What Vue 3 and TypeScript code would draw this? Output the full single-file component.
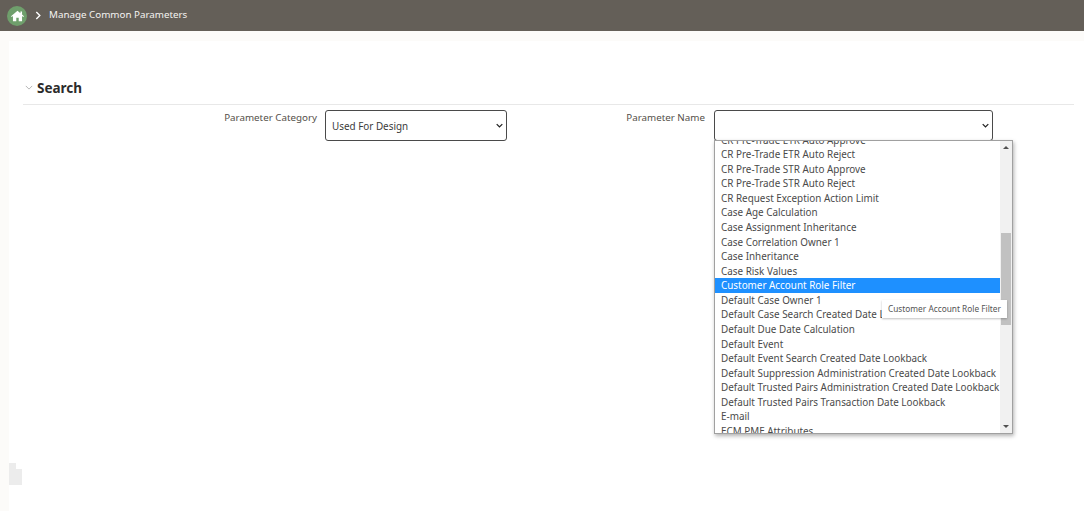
<script setup lang="ts">
const items: string[] = [
  'CR Pre-Trade ETR Auto Approve',
  'CR Pre-Trade ETR Auto Reject',
  'CR Pre-Trade STR Auto Approve',
  'CR Pre-Trade STR Auto Reject',
  'CR Request Exception Action Limit',
  'Case Age Calculation',
  'Case Assignment Inheritance',
  'Case Correlation Owner 1',
  'Case Inheritance',
  'Case Risk Values',
  'Customer Account Role Filter',
  'Default Case Owner 1',
  'Default Case Search Created Date Lookback',
  'Default Due Date Calculation',
  'Default Event',
  'Default Event Search Created Date Lookback',
  'Default Suppression Administration Created Date Lookback',
  'Default Trusted Pairs Administration Created Date Lookback',
  'Default Trusted Pairs Transaction Date Lookback',
  'E-mail',
  'ECM PME Attributes',
]
const selected = 'Customer Account Role Filter'
</script>

<template>
  <div class="page">
    <header class="topbar">
      <span class="home">
        <svg viewBox="0 0 16 14" width="13" height="12">
          <path fill="#fff" d="M8 .6 0 7.3l.9 1L2.4 7v6.6h4.1V9.3h3v4.3h4.1V7l1.5 1.3.9-1-2.4-2V1.4h-2v2.2z" />
        </svg>
      </span>
      <svg class="crumb" viewBox="0 0 8 10" width="7" height="9">
        <path d="M1.5 1 5.5 5l-4 4" fill="none" stroke="#fff" stroke-width="1.6" />
      </svg>
      <span class="title">Manage Common Parameters</span>
    </header>

    <main class="card">
      <section class="search">
        <div class="search-head">
          <svg viewBox="0 0 10 6" width="8" height="5">
            <path d="M1 1l4 4 4-4" fill="none" stroke="#adadad" stroke-width="1.1" />
          </svg>
          <h2>Search</h2>
        </div>
        <div class="form">
          <div class="field field-cat">
            <label>Parameter Category</label>
            <div class="select">
              <span>Used For Design</span>
              <svg class="chev" viewBox="0 0 10 6" width="7" height="5">
                <path d="M1 1l4 4 4-4" fill="none" stroke="#222" stroke-width="1.8" />
              </svg>
            </div>
          </div>
          <div class="field field-name">
            <label>Parameter Name</label>
            <div class="select select-wide">
              <span></span>
              <svg class="chev" viewBox="0 0 10 6" width="7" height="5">
                <path d="M1 1l4 4 4-4" fill="none" stroke="#222" stroke-width="1.8" />
              </svg>
              <div class="dropdown">
                <div class="options">
                  <div
                    v-for="item in items"
                    :key="item"
                    class="option"
                    :class="{ active: item === selected }"
                  >{{ item }}</div>
                </div>
                <div class="scrollbar">
                  <span class="arrow up"></span>
                  <span class="thumb"></span>
                  <span class="arrow down"></span>
                </div>
                <div class="tooltip">{{ selected }}</div>
              </div>
            </div>
          </div>
        </div>
      </section>
      <div class="tab"></div>
    </main>
  </div>
</template>

<style scoped>
.page {
  width: 1084px;
  height: 511px;
  overflow: hidden;
  background: #fcfbf9;
  font-family: "Noto Sans", "Open Sans", sans-serif;
  display: flex;
  flex-direction: column;
}
.topbar {
  height: 31px;
  flex: none;
  background: #645f58;
  display: flex;
  align-items: center;
  padding-left: 7px;
  color: #fff;
}
.home {
  width: 20px;
  height: 20px;
  border-radius: 50%;
  background: #6f9f6c;
  display: flex;
  align-items: center;
  justify-content: center;
}
.crumb {
  margin-left: 8px;
}
.title {
  margin-left: 7px;
  font-size: 9.8px;
  color: #f4f3f1;
  position: relative;
  top: -1px;
}
.card {
  position: relative;
  flex: 1;
  margin: 10px 0 0 9px;
  background: #fff;
  padding: 28px 10px 0 14px;
}
.search-head {
  display: flex;
  align-items: center;
  gap: 4px;
  height: 36px;
  padding: 2px 0 0 2px;
  border-bottom: 1px solid #e8e8e8;
  box-sizing: border-box;
}
.search-head h2 {
  margin: 0;
  font-size: 13.5px;
  font-weight: 700;
  color: #2b2b2b;
}
.form {
  display: flex;
  padding-top: 5px;
}
.field {
  display: flex;
  gap: 8px;
  align-items: flex-start;
}
.field label {
  width: 100px;
  flex: none;
  font-size: 9.8px;
  color: #55504a;
  line-height: 15px;
  text-align: right;
  white-space: nowrap;
}
.field-cat {
  margin-left: 194px;
}
.field-name {
  margin-left: 98px;
  gap: 9px;
}
.select {
  position: relative;
  width: 182px;
  height: 31px;
  box-sizing: border-box;
  border: 1px solid #4a4a4a;
  border-radius: 3px;
  background: #fff;
  display: flex;
  align-items: center;
  padding-left: 6px;
  font-size: 9.9px;
  color: #3a3a3a;
}
.select-wide {
  width: 279px;
}
.chev {
  position: absolute;
  right: 3px;
  top: 12px;
}
.dropdown {
  position: absolute;
  left: -1px;
  top: 29px;
  width: 299px;
  height: 294px;
  box-sizing: border-box;
  background: #fff;
  border: 1px solid #a0a0a0;
  box-shadow: 1px 2px 4px rgba(0, 0, 0, 0.3);
  display: flex;
  z-index: 2;
}
.options {
  flex: 1;
  min-width: 0;
  overflow: hidden;
  font-size: 9.9px;
  font-weight: 400;
  color: #4a4a4a;
}
.option {
  height: 14.58px;
  line-height: 14.58px;
  padding-left: 6px;
  white-space: nowrap;
  position: relative;
  top: -8.5px;
}
.option.active {
  background: #1e90ff;
  color: #fff;
}
.scrollbar {
  width: 12px;
  flex: none;
  background: #f1f1f1;
  position: relative;
}
.thumb {
  position: absolute;
  left: 1px;
  right: 1px;
  top: 92px;
  height: 92px;
  background: #c1c1c1;
}
.arrow {
  position: absolute;
  left: 3px;
  width: 0;
  height: 0;
  border-left: 3px solid transparent;
  border-right: 3px solid transparent;
}
.arrow.up {
  top: 5px;
  border-bottom: 3px solid #505050;
}
.arrow.down {
  bottom: 5px;
  border-top: 3px solid #505050;
}
.tooltip {
  position: absolute;
  left: 167px;
  top: 159px;
  height: 18px;
  line-height: 18px;
  padding: 0 6px;
  background: #fff;
  font-size: 8.3px;
  color: #555;
  white-space: nowrap;
  box-shadow: 0 1px 2px rgba(0, 0, 0, 0.25);
}
.tab {
  position: absolute;
  left: 0;
  top: 422px;
  width: 13px;
  height: 22px;
  background: #ececec;
  clip-path: polygon(0 0, 7px 0, 7px 6px, 100% 6px, 100% 100%, 0 100%);
}
</style>
<style>
html, body { margin: 0; background: #fff; }
</style>
